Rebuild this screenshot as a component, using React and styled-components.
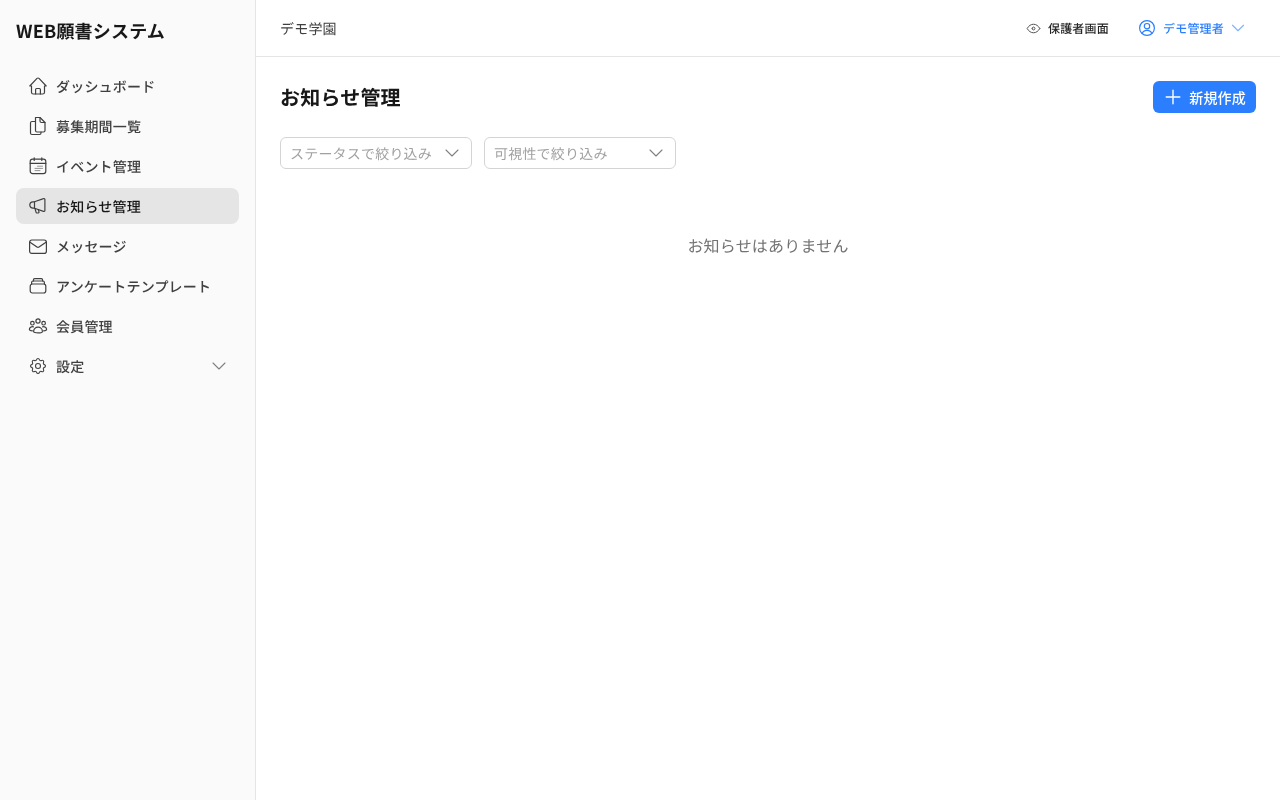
import React from "react";
import styled, { createGlobalStyle } from "styled-components";
import { TbSettings, TbEye } from "react-icons/tb";

const GlobalStyle = createGlobalStyle`
    html, body {
        margin: 0;
        padding: 0;
        height: 100%;
        background: #fff;
        font-family: "Noto Sans CJK JP", "Noto Sans", sans-serif;
        text-rendering: geometricPrecision;
        letter-spacing: 0.2px;
    }
    * {
        box-sizing: border-box;
    }
`

const Icon = ({ children, strokeWidth = 1.2 }) => (
    <svg width="20" height="20" viewBox="0 0 20 20" fill="none" stroke="currentColor" strokeWidth={strokeWidth} strokeLinecap="round" strokeLinejoin="round">
        {children}
    </svg>
)

const HomeIcon = () => (
    <Icon>
        <path d="M1.800 10 9 2.400a1.400 1.400 0 0 1 2 0l7.200 7.600h-1.700v6.200a1.800 1.800 0 0 1-1.800 1.800H5.300a1.800 1.800 0 0 1-1.800-1.800V10z" />
        <path d="M7.600 18v-4.500a1 1 0 0 1 1-1h2.800a1 1 0 0 1 1 1V18" />
    </Icon>
)

const FilesIcon = () => (
    <Icon>
        <path d="M7.500 1.500H12l5 5v8a1.500 1.500 0 0 1-1.500 1.500H9a1.500 1.500 0 0 1-1.500-1.500z" />
        <path d="M12 1.500V5a1.500 1.500 0 0 0 1.500 1.500H17" />
        <path d="M7.500 5.500H4A1.500 1.500 0 0 0 2.500 7v10A1.500 1.500 0 0 0 4 18.500h7.500A1.500 1.500 0 0 0 13 17v-1" />
    </Icon>
)

const CalendarIcon = () => (
    <Icon>
        <rect x="2.200" y="3.200" width="15.600" height="14.400" rx="2.400" />
        <path d="M2.200 7.400h15.600M6.200 1.800v2.600M13.800 1.800v2.600" />
        <path d="M9.500 10.200h5M7 12.400h7.500M7 14.600h5" strokeWidth="0.8" opacity="0.7" />
    </Icon>
)

const MegaphoneIcon = () => (
    <Icon>
        <path d="M6.500 5.800l9-3.200a1 1 0 0 1 1.400.9v11a1 1 0 0 1-1.400.9l-9-3.200H5a3.200 3.200 0 0 1 0-6.400z" />
        <path d="M6.500 5.800v6.400M7 12.500l1 3.700a1 1 0 0 0 1 .8h1a1 1 0 0 0 1-1.200l-.7-2.300" />
    </Icon>
)

const MailIcon = () => (
    <Icon>
        <rect x="1.600" y="4" width="16.800" height="13.400" rx="2.200" />
        <path d="M2 6.200l7 4.900a1.800 1.800 0 0 0 2 0l7-4.900" />
    </Icon>
)

const TrayIcon = () => (
    <Icon>
        <rect x="2.200" y="8" width="15.600" height="9" rx="2.200" />
        <path d="M3.600 8V6.600C3.600 5.600 4.300 5 5.200 5h9.600c.9 0 1.600.6 1.600 1.600V8" />
        <path d="M5.400 5V4c0-.8.6-1.300 1.300-1.300h6.600c.7 0 1.300.5 1.300 1.300v1" />
    </Icon>
)

const PeopleIcon = () => (
    <Icon>
        <circle cx="10" cy="5" r="2.100" />
        <circle cx="4.400" cy="7.200" r="1.800" />
        <circle cx="15.600" cy="7.200" r="1.800" />
        <path d="M5.600 15.400c0-2.400 2-4.200 4.400-4.200s4.400 1.800 4.400 4.200c0 .8-2 1.500-4.400 1.500s-4.400-.7-4.400-1.500z" />
        <path d="M5.400 10.800c-2-.5-4 .7-4 2.400 0 1 1.200 1.500 3 1.600M14.600 10.800c2-.5 4 .7 4 2.400 0 1-1.200 1.500-3 1.600" />
    </Icon>
)

const UserIcon = () => (
    <svg width="18" height="18" viewBox="0 0 18 18" fill="none" stroke="currentColor" strokeWidth="1.2" strokeLinecap="round" strokeLinejoin="round">
        <circle cx="9" cy="9" r="7.400" />
        <circle cx="9" cy="7.200" r="2.700" />
        <path d="M4.200 14.400c.6-1.900 2.500-3.100 4.800-3.100s4.200 1.200 4.800 3.100" />
    </svg>
)

const PlusIcon = () => (
    <svg width="16" height="16" viewBox="0 0 16 16" fill="none" stroke="currentColor" strokeWidth="1.400" strokeLinecap="round">
        <path d="M8 1.200v13.600M1.200 8h13.600" />
    </svg>
)

const Chevron = ({ width = 12 }) => (
    <svg width="16" height="16" viewBox="0 0 16 16" fill="none" stroke="currentColor" strokeWidth="1.100" strokeLinecap="round" strokeLinejoin="round">
        <path d={`M${8 - width / 2} ${8 - width / 4}l${width / 2} ${width / 2}l${width / 2} ${-width / 2}`} />
    </svg>
)

const navItems = [
    { label: "ダッシュボード", icon: <HomeIcon /> },
    { label: "募集期間一覧", icon: <FilesIcon /> },
    { label: "イベント管理", icon: <CalendarIcon /> },
    { label: "お知らせ管理", icon: <MegaphoneIcon />, active: true },
    { label: "メッセージ", icon: <MailIcon /> },
    { label: "アンケートテンプレート", icon: <TrayIcon /> },
    { label: "会員管理", icon: <PeopleIcon /> },
    { label: "設定", icon: <TbSettings size={20} strokeWidth={1.3} />, submenu: true },
]

const App = () => {
    return (
        <>
            <GlobalStyle />
            <Layout>
                <Sidebar>
                    <Logo>WEB願書システム</Logo>
                    <Nav>
                        {navItems.map(item => (
                            <NavItem key={item.label} $active={item.active}>
                                <NavIcon>{item.icon}</NavIcon>
                                <NavLabel>{item.label}</NavLabel>
                                {item.submenu && <SubmenuArrow><Chevron /></SubmenuArrow>}
                            </NavItem>
                        ))}
                    </Nav>
                </Sidebar>
                <Main>
                    <Header>
                        <SchoolName>デモ学園</SchoolName>
                        <HeaderActions>
                            <GuardianLink>
                                <TbEye size={17} strokeWidth={1.4} />
                                <span>保護者画面</span>
                            </GuardianLink>
                            <UserMenu>
                                <UserIcon />
                                <span>デモ管理者</span>
                                <UserArrow><Chevron width={11} /></UserArrow>
                            </UserMenu>
                        </HeaderActions>
                    </Header>
                    <Content>
                        <TitleRow>
                            <PageTitle>お知らせ管理</PageTitle>
                            <CreateButton>
                                <PlusIcon />
                                <span>新規作成</span>
                            </CreateButton>
                        </TitleRow>
                        <Filters>
                            <FilterSelect>
                                <FilterLabel>ステータスで絞り込み</FilterLabel>
                                <Chevron />
                            </FilterSelect>
                            <FilterSelect>
                                <FilterLabel>可視性で絞り込み</FilterLabel>
                                <Chevron />
                            </FilterSelect>
                        </Filters>
                        <EmptyText>お知らせはありません</EmptyText>
                    </Content>
                </Main>
            </Layout>
        </>
    )
}

const Layout = styled.div`
    display: flex;
    height: 800px;
    overflow: hidden;
    will-change: transform;
`

const Sidebar = styled.aside`
    width: 256px;
    flex-shrink: 0;
    height: 100%;
    background-color: #fafafa;
    border-right: 1px solid #e5e5e5;
    padding: 16px;
`

const Logo = styled.div`
    height: 30px;
    line-height: 30px;
    font-size: 18px;
    font-weight: 700;
    color: #171717;
`

const Nav = styled.nav`
    display: flex;
    flex-direction: column;
    gap: 4px;
    margin-top: 22px;
`

const NavItem = styled.div`
    display: flex;
    align-items: center;
    height: 36px;
    padding: 0 12px;
    border-radius: 8px;
    font-size: 14px;
    font-weight: 500;
    color: ${props => props.$active ? "#171717" : "#404040"};
    background-color: ${props => props.$active ? "#e5e5e5" : "transparent"};
`

const NavIcon = styled.span`
    display: flex;
    width: 20px;
    height: 20px;
    margin-right: 8px;
    color: #404040;
`

const NavLabel = styled.span`
    flex: 1;
    padding-top: 2px;
`

const SubmenuArrow = styled.span`
    display: flex;
    color: #808080;
`

const Main = styled.main`
    flex: 1;
    min-width: 0;
    display: flex;
    flex-direction: column;
`

const Header = styled.header`
    display: flex;
    justify-content: space-between;
    align-items: center;
    height: 57px;
    padding: 0 24px;
    border-bottom: 1px solid #e5e5e5;
`

const SchoolName = styled.div`
    padding-top: 2px;
    font-size: 14px;
    color: #404040;
`

const HeaderActions = styled.div`
    display: flex;
    align-items: center;
    gap: 29px;
    padding-right: 10px;
`

const GuardianLink = styled.div`
    display: flex;
    align-items: center;
    gap: 6px;
    font-size: 12px;
    font-weight: 500;
    color: #262626;

    svg {
        color: #525252;
    }
`

const UserMenu = styled.div`
    display: flex;
    align-items: center;
    gap: 7px;
    font-size: 12px;
    font-weight: 500;
    color: #2b7fff;
`

const UserArrow = styled.span`
    display: flex;
    margin-left: -1px;
    opacity: 0.6;
`

const Content = styled.div`
    padding: 24px;
    display: flex;
    flex-direction: column;
`

const TitleRow = styled.div`
    display: flex;
    justify-content: space-between;
    align-items: center;
    height: 32px;
`

const PageTitle = styled.h1`
    margin: 0;
    font-size: 20px;
    line-height: 32px;
    font-weight: 700;
    color: #171717;
`

const CreateButton = styled.button`
    display: flex;
    align-items: center;
    gap: 8px;
    height: 32px;
    padding: 0 10px 0 12px;
    border: 0;
    border-radius: 6px;
    background-color: #2b7fff;
    color: #fff;
    font-family: inherit;
    font-size: 14px;
    font-weight: 500;
    letter-spacing: inherit;
`

const Filters = styled.div`
    display: flex;
    gap: 12px;
    margin-top: 24px;
`

const FilterSelect = styled.div`
    display: flex;
    justify-content: space-between;
    align-items: center;
    width: 192px;
    height: 32px;
    padding: 0 11px 0 9px;
    border: 1px solid #d4d4d4;
    border-radius: 6px;
    font-size: 14px;
    color: #a1a1a1;

    svg {
        color: #808080;
    }
`

const FilterLabel = styled.span`
    padding-top: 2px;
`

const EmptyText = styled.div`
    margin-top: 64px;
    text-align: center;
    font-size: 16px;
    line-height: 24px;
    color: #737373;
`

export default App
